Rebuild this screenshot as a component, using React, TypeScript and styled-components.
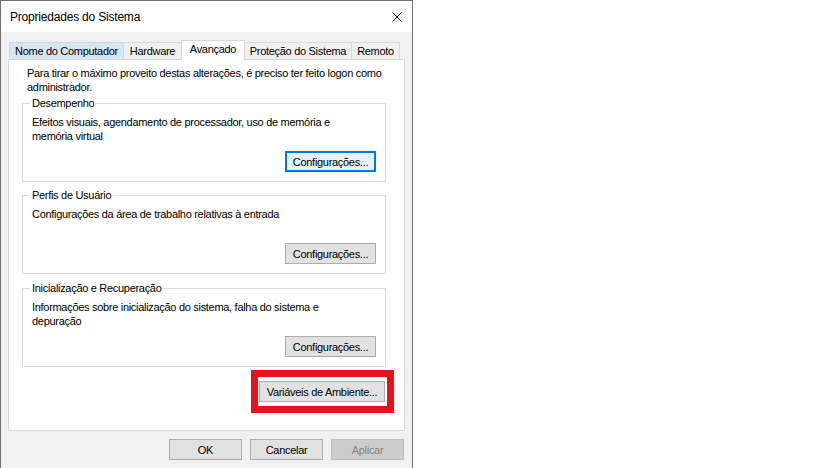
import styled, { createGlobalStyle, css } from 'styled-components';

const GlobalStyle = createGlobalStyle`
  html, body {
    margin: 0;
    padding: 0;
    height: 468px;
    overflow: hidden;
    background: #ffffff;
  }
  * {
    box-sizing: border-box;
  }
`;

const Page = styled.div`
  display: flex;
  align-items: flex-start;
  font-family: 'Liberation Sans', Arial, sans-serif;
  font-size: 11px;
  letter-spacing: -0.3px;
  color: #000;
`;

// the dialog goes on below the bottom of the shot, so no bottom border
const Dialog = styled.div`
  width: 413px;
  height: 468px;
  border: 1px solid #707070;
  border-bottom: none;
  background: #f0f0f0;
  display: flex;
  flex-direction: column;
  overflow: hidden;
`;

const TitleBar = styled.div`
  height: 31px;
  flex-shrink: 0;
  background: #ffffff;
  display: flex;
  align-items: center;
  justify-content: space-between;
  padding-left: 9px;
`;

const TitleText = styled.span`
  font-size: 12px;
  letter-spacing: -0.2px;
`;

const CloseButton = styled.div`
  width: 30px;
  height: 31px;
  display: flex;
  align-items: center;
  justify-content: center;
`;

const Body = styled.div`
  padding: 8px 7px 0 7px;
  display: flex;
  flex-direction: column;
`;

const TabStrip = styled.div`
  display: flex;
  align-items: flex-end;
  height: 19px;
  padding-left: 2px;
  position: relative;
  z-index: 1;
`;

const Tab = styled.div<{ $width: number; $active?: boolean; $hover?: boolean }>`
  width: ${(p) => p.$width}px;
  height: 17px;
  display: flex;
  align-items: center;
  justify-content: center;
  border: 1px solid #d9d9d9;
  border-bottom: none;
  background: #f0f0f0;
  margin-left: -1px;
  white-space: nowrap;
  padding-bottom: 1px;

  ${(p) =>
    p.$hover &&
    css`
      background: #d8e6f2;
      border-color: #c5d7ea;
    `}

  ${(p) =>
    p.$active &&
    css`
      height: 20px;
      background: #ffffff;
      margin-bottom: -1px;
      padding-bottom: 4px;
      position: relative;
      z-index: 2;
    `}
`;

const TabPanel = styled.div`
  height: 372px;
  flex-shrink: 0;
  background: #ffffff;
  border: 1px solid #d9d9d9;
  padding: 6px 10px 0 13px;
  display: flex;
  flex-direction: column;
`;

const Intro = styled.p`
  margin: 0 0 3px 5px;
  line-height: 14px;
`;

const Group = styled.fieldset<{ $gap?: number }>`
  margin: ${(p) => p.$gap ?? 0}px 8px 0 0;
  padding: 5px 9px 9px 9px;
  border: 1px solid #dcdcdc;
  min-width: 0;
`;

const Legend = styled.legend`
  padding: 0 2px;
  margin-left: -2px;
  line-height: 13px;
`;

const GroupBody = styled.div`
  height: 57px;
  display: flex;
  flex-direction: column;
`;

const GroupText = styled.div`
  line-height: 14px;
`;

const Button = styled.button<{ $width: number; $focused?: boolean }>`
  width: ${(p) => p.$width}px;
  height: 21px;
  padding: 0;
  font-family: inherit;
  font-size: 11px;
  letter-spacing: -0.3px;
  color: #000;
  background: #e1e1e1;
  border: 1px solid #adadad;
  border-radius: 0;

  ${(p) =>
    p.$focused &&
    css`
      border-color: #0078d7;
      box-shadow: inset 0 0 0 1px #0078d7;
      background: #e5f1fb;
    `}

  &:disabled {
    background: #cccccc;
    border-color: #bfbfbf;
    color: #838383;
  }
`;

const GroupButton = styled(Button)`
  margin-top: auto;
  align-self: flex-end;
`;

const EnvRow = styled.div`
  display: flex;
  justify-content: flex-end;
  margin-top: 3px;
`;

const Highlight = styled.div`
  border: 7px solid #e3121c;
  padding: 4px 2px 4px 1px;
`;

const Footer = styled.div`
  display: flex;
  justify-content: flex-end;
  gap: 8px;
  margin-top: 8px;
  padding-right: 1px;
`;

const tabs = [
  { label: 'Nome do Computador', width: 115, hover: true },
  { label: 'Hardware', width: 59 },
  { label: 'Avançado', width: 64, active: true },
  { label: 'Proteção do Sistema', width: 108 },
  { label: 'Remoto', width: 49 },
];

const groups = [
  {
    title: 'Desempenho',
    text: ['Efeitos visuais, agendamento de processador, uso de memória e', 'memória virtual'],
    focused: true,
    gap: 0,
  },
  {
    title: 'Perfis de Usuário',
    text: ['Configurações da área de trabalho relativas à entrada'],
    gap: 7,
  },
  {
    title: 'Inicialização e Recuperação',
    text: ['Informações sobre inicialização do sistema, falha do sistema e', 'depuração'],
    gap: 8,
  },
];

function CloseIcon() {
  return (
    <svg width="10" height="10" viewBox="0 0 10 10">
      <path d="M0.5 0.5 L9.5 9.5 M9.5 0.5 L0.5 9.5" stroke="#000" strokeWidth="1" fill="none" />
    </svg>
  );
}

export default function App() {
  return (
    <>
      <GlobalStyle />
      <Page>
        <Dialog>
          <TitleBar>
            <TitleText>Propriedades do Sistema</TitleText>
            <CloseButton>
              <CloseIcon />
            </CloseButton>
          </TitleBar>

          <Body>
            <TabStrip>
              {tabs.map((t) => (
                <Tab key={t.label} $width={t.width} $active={t.active} $hover={t.hover}>
                  {t.label}
                </Tab>
              ))}
            </TabStrip>

            <TabPanel>
              <Intro>
                Para tirar o máximo proveito destas alterações, é preciso ter feito logon como
                <br />
                administrador.
              </Intro>

              {groups.map((g) => (
                <Group key={g.title} $gap={g.gap}>
                  <Legend>{g.title}</Legend>
                  <GroupBody>
                    {g.text.map((line) => (
                      <GroupText key={line}>{line}</GroupText>
                    ))}
                    <GroupButton $width={91} $focused={g.focused}>
                      Configurações...
                    </GroupButton>
                  </GroupBody>
                </Group>
              ))}

              <EnvRow>
                <Highlight>
                  <Button $width={126}>Variáveis de Ambiente...</Button>
                </Highlight>
              </EnvRow>
            </TabPanel>

            <Footer>
              <Button $width={73}>OK</Button>
              <Button $width={73}>Cancelar</Button>
              <Button $width={73} disabled>
                Aplicar
              </Button>
            </Footer>
          </Body>
        </Dialog>
      </Page>
    </>
  );
}
